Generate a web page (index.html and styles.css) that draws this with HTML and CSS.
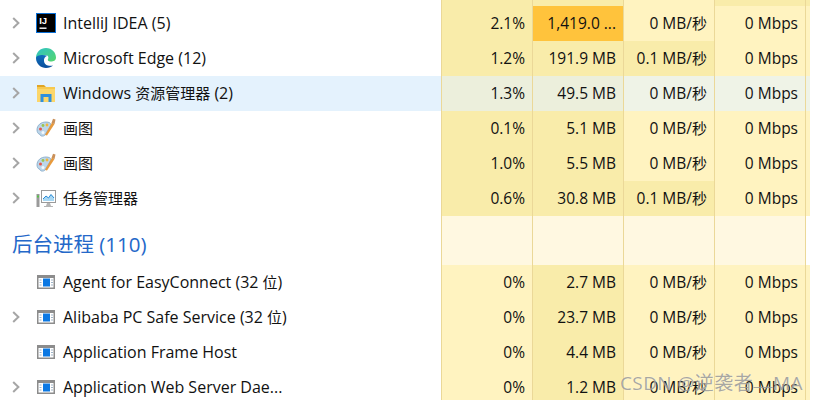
FILE: index.html
```html
<!DOCTYPE html>
<html lang="zh-CN">
<head>
<meta charset="utf-8">
<title>任务管理器</title>
<link rel="stylesheet" href="styles.css">
</head>
<body>
<svg class="defs" width="0" height="0" aria-hidden="true">
  <defs>
    <symbol id="chev" viewBox="0 0 8 12"><path d="M1.2 1 L6.4 6 L1.2 11" fill="none" stroke="#a6a6a6" stroke-width="2"/></symbol>
    <linearGradient id="edgeA" x1="0" y1="0" x2="1" y2="1"><stop offset="0" stop-color="#2fc3c8"/><stop offset="1" stop-color="#55d66b"/></linearGradient>
    <linearGradient id="edgeB" x1="0" y1="0" x2="0" y2="1"><stop offset="0" stop-color="#0f6fbd"/><stop offset="1" stop-color="#0a4f9c"/></linearGradient>
    <symbol id="paint" viewBox="0 0 20 20">
      <path d="M1 12 C1 7 5 4 10 4 C13 4 15 5 15 7 L9 17 C7 19 4 18 4 16.500 C2 16 1 14 1 12Z" fill="#bcd6ea" stroke="#7fa4c4" stroke-width=".8"/>
      <circle cx="4.500" cy="11" r="1.500" fill="#e2574c"/>
      <circle cx="7" cy="7.500" r="1.400" fill="#9ac552"/>
      <circle cx="11" cy="7" r="1.400" fill="#f1b53e"/>
      <circle cx="7" cy="14.500" r="1.500" fill="#f4f9fd"/>
      <path d="M9 17 L16 4.500 L18.500 6 L11 17.500Z" fill="#e89a3c"/>
      <path d="M15.500 5 L17 .8 L19.500 1.500 L18.500 6Z" fill="#c9905a"/>
    </symbol>
    <symbol id="app" viewBox="0 0 18 14">
      <rect x=".75" y=".75" width="16.500" height="12.500" fill="#fff" stroke="#8c8c8c" stroke-width="1.500"/>
      <rect x="1" y="1" width="16" height="2" fill="#8c8c8c"/>
      <rect x="6" y="3.500" width="7" height="8" fill="#0b78e3"/>
      <path d="M2.500 5h2M2.500 7.500h2M2.500 10h2M14 5h2M14 7.500h2M14 10h2" stroke="#9fb4c8" stroke-width="1"/>
    </symbol>
  </defs>
</svg>
<main class="table">
  <div class="row row-stub">
    <div class="name"></div><div class="cell d"></div><div class="cell d"></div><div class="cell l"></div><div class="cell d"></div><div class="end d"></div>
  </div>

  <div class="row">
    <div class="name"><svg class="chev"><use href="#chev"/></svg>
      <svg class="icon" viewBox="0 0 20 20"><rect width="20" height="20" fill="#0a6fd6"/><rect x="1" y="1" width="18" height="18" fill="#000"/><text x="3.200" y="10.500" class="ij">IJ</text><rect x="3.500" y="14.500" width="7" height="1.400" fill="#fff"/></svg>
      <span class="label">IntelliJ IDEA (5)</span></div>
    <div class="cell d">2.1%</div><div class="cell o">1,419.0 ...</div><div class="cell l">0 MB/<span class="cjk">秒</span></div><div class="cell l">0 Mbps</div><div class="end l"></div>
  </div>

  <div class="row">
    <div class="name"><svg class="chev"><use href="#chev"/></svg>
      <svg class="icon" viewBox="0 0 20 20"><path d="M0 10 C0 4 4.500 0 10 0 C16 0 20 4.500 20 9.500 C20 12.500 17.500 13.500 15 13.500 C12 13.500 11.500 12 12 11 C13 9.500 12 7 9.500 7 C4 7 0 11 0 10Z" fill="url(#edgeA)"/><path d="M0 10 C0 16 5 20 10 20 C13 20 15.500 19 17 17.500 C13 18.500 8.500 17.500 8 13 C7.700 10.500 9 8.500 11.500 7.800 C7 6 0 7 0 10Z" fill="url(#edgeB)"/></svg>
      <span class="label">Microsoft Edge (12)</span></div>
    <div class="cell d">1.2%</div><div class="cell d">191.9 MB</div><div class="cell d">0.1 MB/<span class="cjk">秒</span></div><div class="cell l">0 Mbps</div><div class="end l"></div>
  </div>

  <div class="row row-hi">
    <div class="name"><svg class="chev"><use href="#chev"/></svg>
      <svg class="icon" viewBox="0 0 20 20"><path d="M1 2 H8 L10 4 H1Z" fill="#e0a526"/><rect x="1" y="4" width="18" height="15" fill="#fcd669"/><rect x="1" y="4" width="18" height="2" fill="#f7c94f"/><path d="M4.500 19 V11 H15.500 V19 H12.500 V14 H7.500 V19Z" fill="#2f8fdc"/></svg>
      <span class="label">Windows <span class="cjk">资源管理器</span> (2)</span></div>
    <div class="cell hd">1.3%</div><div class="cell hd">49.5 MB</div><div class="cell hl">0 MB/<span class="cjk">秒</span></div><div class="cell hl">0 Mbps</div><div class="end hl"></div>
  </div>

  <div class="row">
    <div class="name"><svg class="chev"><use href="#chev"/></svg><svg class="icon"><use href="#paint"/></svg><span class="label cjk">画图</span></div>
    <div class="cell d">0.1%</div><div class="cell d">5.1 MB</div><div class="cell l">0 MB/<span class="cjk">秒</span></div><div class="cell l">0 Mbps</div><div class="end l"></div>
  </div>

  <div class="row">
    <div class="name"><svg class="chev"><use href="#chev"/></svg><svg class="icon"><use href="#paint"/></svg><span class="label cjk">画图</span></div>
    <div class="cell d">1.0%</div><div class="cell d">5.5 MB</div><div class="cell l">0 MB/<span class="cjk">秒</span></div><div class="cell l">0 Mbps</div><div class="end l"></div>
  </div>

  <div class="row">
    <div class="name"><svg class="chev"><use href="#chev"/></svg>
      <svg class="icon" viewBox="0 0 20 20"><rect x=".5" y="6" width="3" height="13" fill="#9a9a9a"/><rect x="1" y="7.500" width="2" height="2" fill="#58c04a"/><rect x="5.500" y="2.500" width="14" height="12" fill="#fff" stroke="#9a9a9a"/><path d="M7 11 L10 8 L12.500 10 L15 6.500 L18 10 V13 H7Z" fill="#a8d8f4"/><path d="M7 11 L10 8 L12.500 10 L15 6.500 L18 10" fill="none" stroke="#2a8ad4"/><path d="M11 15 H14 L15 18 H17 V19 H8 V18 H10Z" fill="#b5b5b5"/></svg>
      <span class="label cjk">任务管理器</span></div>
    <div class="cell d">0.6%</div><div class="cell d">30.8 MB</div><div class="cell d">0.1 MB/<span class="cjk">秒</span></div><div class="cell l">0 Mbps</div><div class="end l"></div>
  </div>

  <div class="row row-group">
    <div class="name name-group"><h2 class="group">后台进程 (110)</h2></div>
    <div class="cell g"></div><div class="cell g"></div><div class="cell g"></div><div class="cell g"></div><div class="end"></div>
  </div>

  <div class="row">
    <div class="name"><span class="chev"></span><svg class="icon icon-app"><use href="#app"/></svg><span class="label">Agent for EasyConnect (32 <span class="cjk">位</span>)</span></div>
    <div class="cell l">0%</div><div class="cell d">2.7 MB</div><div class="cell l">0 MB/<span class="cjk">秒</span></div><div class="cell l">0 Mbps</div><div class="end l"></div>
  </div>

  <div class="row">
    <div class="name"><svg class="chev"><use href="#chev"/></svg><svg class="icon icon-app"><use href="#app"/></svg><span class="label">Alibaba PC Safe Service (32 <span class="cjk">位</span>)</span></div>
    <div class="cell l">0%</div><div class="cell d">23.7 MB</div><div class="cell l">0 MB/<span class="cjk">秒</span></div><div class="cell l">0 Mbps</div><div class="end l"></div>
  </div>

  <div class="row">
    <div class="name"><span class="chev"></span><svg class="icon icon-app"><use href="#app"/></svg><span class="label">Application Frame Host</span></div>
    <div class="cell l">0%</div><div class="cell d">4.4 MB</div><div class="cell l">0 MB/<span class="cjk">秒</span></div><div class="cell l">0 Mbps</div><div class="end l"></div>
  </div>

  <div class="row">
    <div class="name"><svg class="chev"><use href="#chev"/></svg><svg class="icon icon-app"><use href="#app"/></svg><span class="label">Application Web Server Dae...</span></div>
    <div class="cell l">0%</div><div class="cell d">1.2 MB</div><div class="cell l">0 MB/<span class="cjk">秒</span></div><div class="cell l">0 Mbps</div><div class="end l"></div>
  </div>
</main>
<div class="watermark">CSDN @逆袭者<span class="dash">——</span>MA</div>
</body>
</html>
```

FILE: styles.css
```css
* { box-sizing: border-box; }
html, body { margin: 0; height: 400px; overflow: hidden; background: #fff; }
body {
  position: relative;
  font-family: "Open Sans", "Noto Sans CJK SC", sans-serif;
  font-size: 16px;
  color: #111;
}
.defs { position: absolute; }
.cjk { font-size: 15px; }
.table { width: 810px; }
.row {
  display: grid;
  grid-template-columns: 441px 91px 91px 91px 91px 5px;
  height: 35px;
}
.row-stub { height: 6px; }
.row-group { height: 49px; }
.name {
  display: flex;
  align-items: center;
  padding: 0 0 2px 12px;
  min-width: 0;
}
.name-group { padding: 5px 0 0 12px; }
.row-hi .name { background: #e4f2fd; }
.chev { width: 8px; height: 12px; flex: none; margin-right: 16px; display: block; }
.icon { width: 20px; height: 20px; flex: none; margin-right: 7px; }
.icon-app { width: 18px; height: 14px; margin: 0 8px 0 1px; }
.ij { font: bold 9.500px "Liberation Sans", sans-serif; fill: #fff; }
.label { white-space: nowrap; }
.group {
  margin: 0;
  font-size: 20.500px;
  font-weight: 400;
  color: #2468c9;
  white-space: nowrap;
}
.cell {
  border-left: 1px solid #ebd898;
  padding-right: 7px;
  font-size: 15.500px;
  line-height: 34px;
  text-align: right;
  white-space: nowrap;
}
.end { border-left: 1px solid #ebd898; }
.d { background: #f9ecaa; }
.l { background: #fff3c0; }
.o { background: #ffc33c; }
.g { background: #fff8e1; }
.hd { background: #ecefdc; }
.hl { background: #eff3e7; }
.watermark {
  position: absolute;
  left: 620px;
  top: 368px;
  font-size: 19px;
  letter-spacing: .4px;
  color: rgba(110, 110, 110, .6);
  text-shadow: 0 0 1px rgba(255, 255, 255, .8);
  white-space: nowrap;
}
.dash { font-size: 10px; letter-spacing: 0; }
```
